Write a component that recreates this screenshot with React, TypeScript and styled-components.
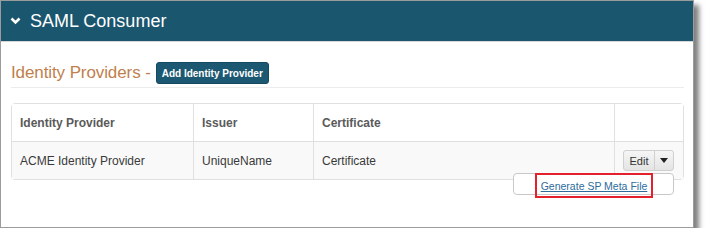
import React from "react";
import styled, { createGlobalStyle } from "styled-components";

const Global = createGlobalStyle`
  html, body { margin: 0; padding: 0; background: #fff; }
  body { font-family: "Liberation Sans", Arial, sans-serif; }
  * { box-sizing: border-box; }
`;

const Window = styled.div`
  width: 694px;
  height: 228px;
  border: 1px solid #9c9c9c;
  background: #fff;
  box-shadow: 5px 5px 5px rgba(0, 0, 0, 0.5);
  display: flex;
  flex-direction: column;
`;

const Header = styled.div`
  height: 41px;
  background: #1b566f;
  border-bottom: 1px solid #d6d6d6;
  display: flex;
  align-items: center;
  padding-left: 9px;
  gap: 9px;
  color: #fff;
  font-size: 18px;
`;

const Content = styled.div`
  padding: 20px 9px 0 10px;
  position: relative;
`;

const TitleRow = styled.div`
  display: flex;
  align-items: center;
  gap: 5px;
  height: 22px;
`;

const Title = styled.h2`
  margin: 0;
  font-weight: 300;
  font-size: 17px;
  color: #c07f4e;
  letter-spacing: -0.1px;
`;

const PrimaryButton = styled.button`
  height: 22px;
  width: 113px;
  padding: 0;
  border: 1px solid #16485e;
  border-radius: 3px;
  background: #1d5872;
  color: #fff;
  font-family: inherit;
  font-size: 10px;
  font-weight: bold;
`;

const Divider = styled.div`
  height: 1px;
  background: #ececec;
  margin: 3px 0 15px;
`;

const Table = styled.table`
  width: 673px;
  border-collapse: separate;
  border-spacing: 0;
  border: 1px solid #e0e0e0;
  border-radius: 4px;
  table-layout: fixed;
  font-size: 12px;
`;

const Th = styled.th<{ $w: number }>`
  width: ${(p) => p.$w}px;
  height: 37px;
  text-align: left;
  padding: 0 8px;
  font-weight: bold;
  color: #5a5a5a;
  background: #fff;
  & + & { border-left: 1px solid #e0e0e0; }
`;

const Td = styled.td<{ $right?: boolean }>`
  height: 38px;
  padding: 0 ${(p) => (p.$right ? "9px" : "8px")} 0 8px;
  color: #3a3a3a;
  background: #f9f9f9;
  border-top: 1px solid #e0e0e0;
  text-align: ${(p) => (p.$right ? "right" : "left")};
  & + & { border-left: 1px solid #e0e0e0; }
`;

const BtnGroup = styled.div`
  display: inline-flex;
  position: relative;
  vertical-align: middle;
`;

const SmallButton = styled.button<{ $w: number; $first?: boolean }>`
  width: ${(p) => p.$w}px;
  height: 21px;
  padding: 0;
  border: 1px solid #d0d0d0;
  background: linear-gradient(#f6f6f6, #e4e4e4);
  color: #333;
  font-family: inherit;
  font-size: 11px;
  display: flex;
  align-items: center;
  justify-content: center;
  border-radius: ${(p) => (p.$first ? "3px 0 0 3px" : "0 3px 3px 0")};
  margin-left: ${(p) => (p.$first ? "0" : "-1px")};
`;

const Menu = styled.div`
  position: absolute;
  top: calc(100% + 2px);
  right: 0;
  width: 161px;
  height: 22px;
  background: #fff;
  border: 1px solid #c8c8c8;
  border-radius: 4px;
  padding-left: 21px;
  display: flex;
  align-items: flex-start;
  text-align: left;
`;

const Highlight = styled.div`
  margin-top: -1px;
  height: 25px;
  width: 118px;
  border: 2px solid #e3202b;
  display: flex;
  align-items: center;
  justify-content: center;
`;

const MenuLink = styled.a`
  color: #2c6c9c;
  font-size: 10.5px;
  text-decoration: underline;
  white-space: nowrap;
`;

export default function App() {
  return (
    <>
      <Global />
      <Window>
        <Header>
          <svg width="11" height="8" viewBox="0 0 11 8">
            <polyline points="1.5,1.5 5.5,5.5 9.5,1.5" fill="none" stroke="#fff" strokeWidth="2.6" />
          </svg>
          <span>SAML Consumer</span>
        </Header>
        <Content>
          <TitleRow>
            <Title>Identity Providers -</Title>
            <PrimaryButton>Add Identity Provider</PrimaryButton>
          </TitleRow>
          <Divider />
          <Table>
            <thead>
              <tr>
                <Th $w={181}>Identity Provider</Th>
                <Th $w={120}>Issuer</Th>
                <Th $w={301}>Certificate</Th>
                <Th $w={69}></Th>
              </tr>
            </thead>
            <tbody>
              <tr>
                <Td>ACME Identity Provider</Td>
                <Td>UniqueName</Td>
                <Td>Certificate</Td>
                <Td $right>
                  <BtnGroup>
                    <SmallButton $w={32} $first>Edit</SmallButton>
                    <SmallButton $w={20}>
                      <svg width="8" height="5" viewBox="0 0 8 5">
                        <polygon points="0,0 8,0 4,5" fill="#222" />
                      </svg>
                    </SmallButton>
                    <Menu>
                      <Highlight>
                        <MenuLink href="#">Generate SP Meta File</MenuLink>
                      </Highlight>
                    </Menu>
                  </BtnGroup>
                </Td>
              </tr>
            </tbody>
          </Table>
        </Content>
      </Window>
    </>
  );
}
